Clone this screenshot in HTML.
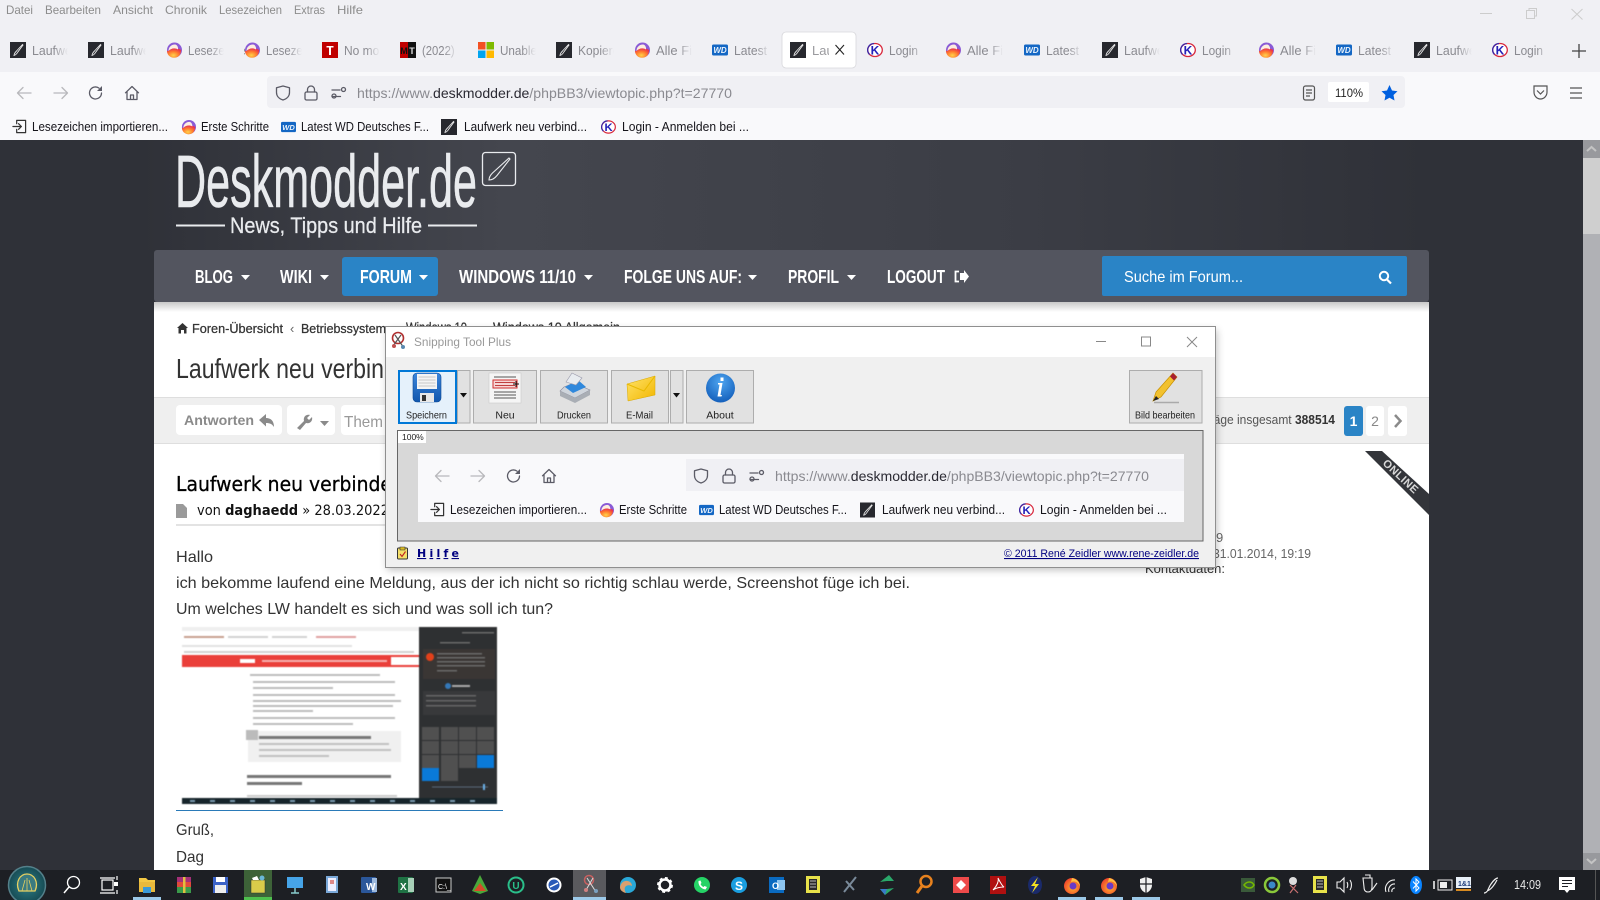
<!DOCTYPE html>
<html lang="de"><head><meta charset="utf-8"><title>Laufwerk neu verbinden</title>
<style>
html,body{margin:0;padding:0;background:#2f3138;overflow:hidden}
svg{display:block}
text{font-family:"Liberation Sans",Arial,sans-serif}
.m{font-size:12px;fill:#8c8c8c}
.t{font-size:13px;fill:#8a8a90}
.b{font-size:12.5px;fill:#15141a}
.n{font-size:18px;font-weight:700;fill:#fff}
.p{font-size:16px;fill:#333}
.dj{font-family:"DejaVu Sans",sans-serif}
.l{font-size:10.5px;fill:#222;text-anchor:middle}
.ic{fill:none;stroke:#5b5b66;stroke-width:1.3;stroke-linecap:round;stroke-linejoin:round}
.bc{font-size:13px;fill:#333;stroke:#333;stroke-width:.25}
</style></head><body>
<svg xmlns="http://www.w3.org/2000/svg" width="1600" height="900" viewBox="0 0 1600 900">
<defs>
<linearGradient id="fade"><stop offset="0" stop-color="#f0f0f4" stop-opacity="0"/><stop offset="1" stop-color="#f0f0f4"/></linearGradient>
<linearGradient id="hd"><stop offset="0" stop-color="#2f3138"/><stop offset=".09" stop-color="#2f3138"/><stop offset=".32" stop-color="#44464e"/><stop offset=".65" stop-color="#3b3d45"/><stop offset=".9" stop-color="#2f3138"/><stop offset="1" stop-color="#2f3138"/></linearGradient>
<linearGradient id="sh" x2="0" y2="1"><stop offset="0" stop-color="#c8c8c8"/><stop offset="1" stop-color="#fff"/></linearGradient>
<radialGradient id="ffg" cx=".45" cy=".75" r=".7"><stop offset="0" stop-color="#ffd24a"/><stop offset=".55" stop-color="#ff7a2e"/><stop offset="1" stop-color="#e8324e"/></radialGradient>
<linearGradient id="flop" x2="0" y2="1"><stop offset="0" stop-color="#3c86dc"/><stop offset="1" stop-color="#1257ad"/></linearGradient>
<radialGradient id="inf" cx=".5" cy=".3" r=".8"><stop offset="0" stop-color="#4ea5f0"/><stop offset="1" stop-color="#0c56b4"/></radialGradient>
<linearGradient id="env" x2="1" y2="1"><stop offset="0" stop-color="#ffe36a"/><stop offset="1" stop-color="#f2b600"/></linearGradient>
<radialGradient id="orb" cx=".5" cy=".5" r=".55"><stop offset="0" stop-color="#2f7f86"/><stop offset="1" stop-color="#14464f"/></radialGradient>
<radialGradient id="fx" cx=".55" cy=".6" r=".6"><stop offset="0" stop-color="#ffb52e"/><stop offset="1" stop-color="#f0442c"/></radialGradient>
<symbol id="dm" viewBox="0 0 16 16"><rect width="16" height="16" fill="#27282e"/><path d="M4 13.500C4.200 11.500 5.500 10 6.500 9L12.500 2.500L13 3L8 9.800C7 11.500 5.800 13 4 13.500Z" fill="none" stroke="#e8e8e8" stroke-width=".9"/></symbol>
<symbol id="ff" viewBox="0 0 16 16"><circle cx="8.500" cy="8" r="7.500" fill="#8a5bd6"/><path d="M8 15.800C3.500 15.800 .8 12 1 8.500C2 10.500 5 6 8 6C11 6 13.500 7 15.200 8C15 12.500 12.500 15.800 8 15.800Z" fill="url(#ffg)"/><path d="M9 2.500C5 2.500 2.500 5.500 2.500 9C4.500 6.500 9 5.500 12 7.500C12.500 5.500 11 2.500 9 2.500Z" fill="#fdeee0"/></symbol>
<symbol id="wd" viewBox="0 0 16 16"><rect y="2.500" width="16" height="11" rx="1.500" fill="#1467c4"/><text x="8" y="11" font-size="8" font-weight="700" font-style="italic" text-anchor="middle" fill="#e9f2fb">WD</text></symbol>
<symbol id="kk" viewBox="0 0 16 16"><ellipse cx="8" cy="8" rx="7.300" ry="6.500" fill="#fff" stroke="#d8283c" stroke-width="1.300"/><path d="M7 1.500A6.500 6.500 0 0 0 2.500 12.500" fill="none" stroke="#3b2aa8" stroke-width="1.300"/><text x="8" y="12.500" font-size="12" font-weight="700" text-anchor="middle" fill="#2420b8">K</text></symbol>
<symbol id="tt" viewBox="0 0 16 16"><rect width="16" height="16" fill="#c00000"/><path d="M4.500 4H11.500V5.500H9V13H7V5.500H4.500Z" fill="#fff"/></symbol>
<symbol id="mt" viewBox="0 0 16 16"><rect width="8" height="16" fill="#c00000"/><rect x="8" width="8" height="16" fill="#111"/><text x="4" y="12" font-size="9" font-weight="700" text-anchor="middle" fill="#111">M</text><text x="12" y="12" font-size="9" font-weight="700" text-anchor="middle" fill="#ddd">T</text></symbol>
<symbol id="ms" viewBox="0 0 16 16"><rect width="7.500" height="7.500" fill="#f25022"/><rect x="8.500" width="7.500" height="7.500" fill="#7fba00"/><rect y="8.500" width="7.500" height="7.500" fill="#00a4ef"/><rect x="8.500" y="8.500" width="7.500" height="7.500" fill="#ffb900"/></symbol>
<symbol id="bk" viewBox="0 0 16 16"><path class="ic" style="stroke:#b8b8bc" d="M15 8H1.500M7 2.500L1.500 8L7 13.500"/></symbol>
<symbol id="fw" viewBox="0 0 16 16"><path class="ic" style="stroke:#b8b8bc" d="M1 8H14.500M9 2.500L14.500 8L9 13.500"/></symbol>
<symbol id="rl" viewBox="0 0 16 16"><path class="ic" d="M13.500 8A6 6 0 1 1 11 3.100"/><path d="M14 1V6H9Z" fill="#5b5b66"/></symbol>
<symbol id="hm" viewBox="0 0 16 16"><path class="ic" d="M1.500 7.800L8 1.500L14.500 7.800M3 6.500V14.500H13V6.500M6.500 14.500V10H9.500V14.500"/></symbol>
<symbol id="sd" viewBox="0 0 16 16"><path class="ic" d="M8 1L14.500 2.800V7.500C14.500 11 12 13.800 8 15C4 13.800 1.500 11 1.500 7.500V2.800Z"/></symbol>
<symbol id="lk" viewBox="0 0 16 16"><rect class="ic" x="2" y="7" width="12" height="8" rx="1.500"/><path class="ic" d="M4.500 7V4.500A3.500 3.500 0 0 1 11.500 4.500V7"/></symbol>
<symbol id="pm" viewBox="0 0 16 16"><path class="ic" d="M1 5H9M1 11.500H9.500"/><circle class="ic" cx="12.500" cy="4.500" r="2"/><circle class="ic" cx="3" cy="11" r="2"/></symbol>
<symbol id="im" viewBox="0 0 16 16"><path class="ic" style="stroke:#333" d="M5 1.500H14.500V14.500H5V11M5 5V1.500M1 8H10M7 5L10 8L7 11"/></symbol>
</defs>

<!-- chrome -->
<rect width="1600" height="72" fill="#f0f0f4"/>
<rect y="72" width="1600" height="68" fill="#f9f9fb"/>
<text class="m" x="6" y="14" textLength="27" lengthAdjust="spacingAndGlyphs">Datei</text>
<text class="m" x="45" y="14" textLength="56" lengthAdjust="spacingAndGlyphs">Bearbeiten</text>
<text class="m" x="113" y="14" textLength="40" lengthAdjust="spacingAndGlyphs">Ansicht</text>
<text class="m" x="165" y="14" textLength="42" lengthAdjust="spacingAndGlyphs">Chronik</text>
<text class="m" x="219" y="14" textLength="63" lengthAdjust="spacingAndGlyphs">Lesezeichen</text>
<text class="m" x="294" y="14" textLength="31" lengthAdjust="spacingAndGlyphs">Extras</text>
<text class="m" x="337" y="14" textLength="26" lengthAdjust="spacingAndGlyphs">Hilfe</text>
<path d="M1480 13.500H1492" stroke="#ccc"/><path d="M1526.500 10.500H1534.500V18.500H1526.500ZM1529 10.500V8.500H1536.500V16H1534.500" fill="none" stroke="#ccc"/><path d="M1571.500 9L1582.500 19.500M1582.500 9L1571.500 19.500" stroke="#ccc"/>

<!-- tabs -->
<text class="t" x="32" y="55" textLength="50" lengthAdjust="spacingAndGlyphs">Laufwerk</text><text class="t" x="110" y="55" textLength="50" lengthAdjust="spacingAndGlyphs">Laufwerk</text><text class="t" x="188" y="55" textLength="64" lengthAdjust="spacingAndGlyphs">Lesezeichen</text><text class="t" x="266" y="55" textLength="64" lengthAdjust="spacingAndGlyphs">Lesezeichen</text><text class="t" x="344" y="55" textLength="46" lengthAdjust="spacingAndGlyphs">No more</text><text class="t" x="422" y="55" textLength="42" lengthAdjust="spacingAndGlyphs">(2022) a</text><text class="t" x="500" y="55" textLength="37" lengthAdjust="spacingAndGlyphs">Unable</text><text class="t" x="578" y="55" textLength="48" lengthAdjust="spacingAndGlyphs">Kopieren</text><text class="t" x="656" y="55" textLength="36" lengthAdjust="spacingAndGlyphs">Alle Fi</text><text class="t" x="734" y="55" textLength="33" lengthAdjust="spacingAndGlyphs">Latest</text><text class="t" x="889" y="55" textLength="29" lengthAdjust="spacingAndGlyphs">Login</text><text class="t" x="967" y="55" textLength="36" lengthAdjust="spacingAndGlyphs">Alle Fi</text><text class="t" x="1046" y="55" textLength="33" lengthAdjust="spacingAndGlyphs">Latest</text><text class="t" x="1124" y="55" textLength="50" lengthAdjust="spacingAndGlyphs">Laufwerk</text><text class="t" x="1202" y="55" textLength="29" lengthAdjust="spacingAndGlyphs">Login</text><text class="t" x="1280" y="55" textLength="36" lengthAdjust="spacingAndGlyphs">Alle Fi</text><text class="t" x="1358" y="55" textLength="33" lengthAdjust="spacingAndGlyphs">Latest</text><text class="t" x="1436" y="55" textLength="50" lengthAdjust="spacingAndGlyphs">Laufwerk</text><text class="t" x="1514" y="55" textLength="29" lengthAdjust="spacingAndGlyphs">Login</text>
<g fill="url(#fade)"><rect x="54" y="40" width="14" height="22"/><rect x="132" y="40" width="14" height="22"/><rect x="210" y="40" width="14" height="22"/><rect x="288" y="40" width="14" height="22"/><rect x="366" y="40" width="14" height="22"/><rect x="444" y="40" width="14" height="22"/><rect x="522" y="40" width="14" height="22"/><rect x="600" y="40" width="14" height="22"/><rect x="678" y="40" width="14" height="22"/><rect x="756" y="40" width="14" height="22"/><rect x="911" y="40" width="14" height="22"/><rect x="989" y="40" width="14" height="22"/><rect x="1068" y="40" width="14" height="22"/><rect x="1146" y="40" width="14" height="22"/><rect x="1224" y="40" width="14" height="22"/><rect x="1302" y="40" width="14" height="22"/><rect x="1380" y="40" width="14" height="22"/><rect x="1458" y="40" width="14" height="22"/><rect x="1536" y="40" width="14" height="22"/></g>
<g fill="#f0f0f4"><rect x="68" y="40" width="20" height="22"/><rect x="146" y="40" width="20" height="22"/><rect x="224" y="40" width="20" height="22"/><rect x="302" y="40" width="20" height="22"/><rect x="380" y="40" width="20" height="22"/><rect x="458" y="40" width="20" height="22"/><rect x="536" y="40" width="20" height="22"/><rect x="614" y="40" width="20" height="22"/><rect x="692" y="40" width="20" height="22"/><rect x="770" y="40" width="12" height="22"/><rect x="925" y="40" width="20" height="22"/><rect x="1003" y="40" width="20" height="22"/><rect x="1082" y="40" width="20" height="22"/><rect x="1160" y="40" width="20" height="22"/><rect x="1238" y="40" width="20" height="22"/><rect x="1316" y="40" width="20" height="22"/><rect x="1394" y="40" width="20" height="22"/><rect x="1472" y="40" width="20" height="22"/><rect x="1550" y="40" width="20" height="22"/></g>
<use href="#dm" x="10" y="42" width="16" height="16"/><use href="#dm" x="88" y="42" width="16" height="16"/><use href="#ff" x="166" y="42" width="16" height="16"/><use href="#ff" x="244" y="42" width="16" height="16"/><use href="#tt" x="322" y="42" width="16" height="16"/><use href="#mt" x="400" y="42" width="16" height="16"/><use href="#ms" x="478" y="42" width="16" height="16"/><use href="#dm" x="556" y="42" width="16" height="16"/><use href="#ff" x="634" y="42" width="16" height="16"/><use href="#wd" x="712" y="42" width="16" height="16"/>
<rect x="782" y="32" width="74" height="36" rx="4" fill="#fff" stroke="#d8d8dc" stroke-width=".8"/>
<use href="#dm" x="790" y="42" width="16" height="16"/>
<text x="812" y="55" font-size="13" fill="#9a9a9e">Lau</text><rect x="829" y="40" width="8" height="20" fill="#fff"/>
<path d="M835.500 45L844 54.500M844 45L835.500 54.500" stroke="#222" stroke-width="1.100"/>
<use href="#kk" x="867" y="42" width="16" height="16"/><use href="#ff" x="945" y="42" width="16" height="16"/><use href="#wd" x="1024" y="42" width="16" height="16"/><use href="#dm" x="1102" y="42" width="16" height="16"/><use href="#kk" x="1180" y="42" width="16" height="16"/><use href="#ff" x="1258" y="42" width="16" height="16"/><use href="#wd" x="1336" y="42" width="16" height="16"/><use href="#dm" x="1414" y="42" width="16" height="16"/><use href="#kk" x="1492" y="42" width="16" height="16"/>
<path d="M1579 44V58M1572 51H1586" stroke="#444" stroke-width="1.300"/>

<!-- toolbar -->
<use href="#bk" x="16" y="85" width="16" height="16"/><use href="#fw" x="53" y="85" width="16" height="16"/><use href="#rl" x="88" y="85" width="16" height="16"/><use href="#hm" x="124" y="85" width="16" height="16"/>
<rect x="267" y="76" width="1138" height="32" rx="4" fill="#f0f0f4"/>
<use href="#sd" x="275" y="85" width="16" height="16"/><use href="#lk" x="303" y="85" width="16" height="16"/><use href="#pm" x="331" y="85" width="16" height="16"/>
<text x="357" y="98" font-size="14" fill="#8a8a90" textLength="375" lengthAdjust="spacingAndGlyphs">https://www.<tspan fill="#2b2a33">deskmodder.de</tspan>/phpBB3/viewtopic.php?t=27770</text>
<g fill="none" stroke="#555" stroke-width="1.200"><rect x="1303.500" y="86" width="11" height="14" rx="2"/><path d="M1306 90H1312M1306 93H1312M1306 96H1310"/></g>
<rect x="1328" y="82" width="41" height="20" rx="2" fill="#fff"/><text x="1335" y="97" font-size="12" fill="#222" textLength="28" lengthAdjust="spacingAndGlyphs">110%</text>
<path d="M1389.500 85L1392 90.500L1397.500 91.200L1393.500 95L1394.500 100.500L1389.500 97.800L1384.500 100.500L1385.500 95L1381.500 91.200L1387 90.500Z" fill="#0060df"/>
<path d="M1534 86H1547V92A6.500 7 0 0 1 1534 92ZM1537 90.500L1540.500 94L1544 90.500" fill="none" stroke="#555" stroke-width="1.200"/>
<path d="M1570 88H1582M1570 93H1582M1570 98H1582" stroke="#555" stroke-width="1.200"/>

<!-- bookmarks -->
<use href="#im" x="12" y="119" width="15" height="15"/><use href="#ff" x="181" y="119" width="15" height="16"/><use href="#wd" x="281" y="119" width="15" height="16"/><use href="#dm" x="441" y="119" width="16" height="16"/><use href="#kk" x="601" y="119" width="15" height="16"/>
<text class="b" x="32" y="131" textLength="136" lengthAdjust="spacingAndGlyphs">Lesezeichen importieren...</text>
<text class="b" x="201" y="131" textLength="68" lengthAdjust="spacingAndGlyphs">Erste Schritte</text>
<text class="b" x="301" y="131" textLength="128" lengthAdjust="spacingAndGlyphs">Latest WD Deutsches F...</text>
<text class="b" x="464" y="131" textLength="123" lengthAdjust="spacingAndGlyphs">Laufwerk neu verbind...</text>
<text class="b" x="622" y="131" textLength="127" lengthAdjust="spacingAndGlyphs">Login - Anmelden bei ...</text>

<!-- page -->
<rect y="140" width="1583" height="730" fill="#2f3138"/>
<rect y="140" width="1583" height="110" fill="url(#hd)"/>
<text x="175" y="207" font-size="74" fill="#e9ebee" stroke="#e9ebee" stroke-width=".6" textLength="302" lengthAdjust="spacingAndGlyphs">Deskmodder.de</text>
<rect x="482.500" y="152.500" width="33" height="33" rx="3" fill="none" stroke="#e9ebee" stroke-width="1.300"/>
<path d="M489 180C489 177 490.500 175 492.500 173L509 158L510 159L497 175.500C495 178 492 180 489 180Z" fill="none" stroke="#e9ebee" stroke-width="1.100"/>
<path d="M176 225.500H225M428 225.500H477" stroke="#e9ebee" stroke-width="2"/>
<text x="230" y="233" font-size="22" fill="#e9ebee" stroke="#e9ebee" stroke-width=".25" textLength="192" lengthAdjust="spacingAndGlyphs">News, Tipps und Hilfe</text>

<rect x="154" y="250" width="1275" height="52" rx="3" fill="#53555f"/>
<rect x="342" y="257" width="96" height="39" rx="3" fill="#2a84c6"/>
<text class="n" x="195" y="283" textLength="38" lengthAdjust="spacingAndGlyphs">BLOG</text>
<text class="n" x="280" y="283" textLength="32" lengthAdjust="spacingAndGlyphs">WIKI</text>
<text class="n" x="360" y="283" textLength="52" lengthAdjust="spacingAndGlyphs">FORUM</text>
<text class="n" x="459" y="283" textLength="117" lengthAdjust="spacingAndGlyphs">WINDOWS 11/10</text>
<text class="n" x="624" y="283" textLength="118" lengthAdjust="spacingAndGlyphs">FOLGE UNS AUF:</text>
<text class="n" x="788" y="283" textLength="51" lengthAdjust="spacingAndGlyphs">PROFIL</text>
<text class="n" x="887" y="283" textLength="58" lengthAdjust="spacingAndGlyphs">LOGOUT</text>
<g fill="#fff"><path d="M241 275H250L245.500 280Z"/><path d="M320 275H329L324.500 280Z"/><path d="M419 275H428L423.500 280Z"/><path d="M584 275H593L588.500 280Z"/><path d="M748 275H757L752.500 280Z"/><path d="M847 275H856L851.500 280Z"/></g>
<path d="M960 273H964V270L969 276.500L964 283V280H960Z" fill="#fff"/><path d="M959 271.500H955.500V281.500H959" fill="none" stroke="#fff" stroke-width="1.800"/>
<rect x="1102" y="256" width="305" height="40" rx="2" fill="#2a84c6"/>
<text x="1124" y="282" font-size="16" fill="#fff" textLength="119" lengthAdjust="spacingAndGlyphs">Suche im Forum...</text>
<circle cx="1384" cy="276" r="4.200" fill="none" stroke="#fff" stroke-width="2"/><path d="M1387 279.500L1391 283.500" stroke="#fff" stroke-width="2.200"/>

<rect x="154" y="302" width="1275" height="568" fill="#fff"/>
<rect x="154" y="302" width="1275" height="10" fill="url(#sh)"/>
<path d="M177 328L182.500 323L188 328H186.500V333.500H184V330H181V333.500H178.500V328Z" fill="#333"/>
<text class="bc" x="192" y="333" textLength="91" lengthAdjust="spacingAndGlyphs">Foren-Übersicht</text>
<text x="290" y="333" font-size="13" fill="#666">‹</text>
<text class="bc" x="301" y="333" textLength="85" lengthAdjust="spacingAndGlyphs">Betriebssystem</text>
<text class="bc" style="font-size:14px" x="406" y="332" textLength="61" lengthAdjust="spacingAndGlyphs">Windows 10</text>
<text class="bc" style="font-size:14px" x="493" y="332" textLength="127" lengthAdjust="spacingAndGlyphs">Windows 10 Allgemein</text>
<text x="176" y="378" font-size="28" fill="#333" textLength="208" lengthAdjust="spacingAndGlyphs">Laufwerk neu verbin</text>

<rect x="154" y="397" width="1275" height="46" fill="#efefef"/>
<path d="M154 397.500H1429M154 443.500H1429" stroke="#dedede"/>
<rect x="176" y="405" width="106" height="30" rx="4" fill="#fff"/>
<text x="184" y="425" font-size="14" font-weight="700" fill="#8a8a8a" textLength="70" lengthAdjust="spacingAndGlyphs">Antworten</text>
<path d="M259 420L266 414V418C271 418 274 421 274 427C272 424 270 423 266 423V426.500Z" fill="#8a8a8a"/>
<rect x="287" y="405" width="48" height="30" rx="4" fill="#fff"/>
<path d="M297 428L304 421C303 417 306 414 310 415L307 418L309 420L312 417C313 421 310 424 306 423L300 430Z" fill="#8a8a8a"/>
<path d="M320 421H329L324.500 426Z" fill="#8a8a8a"/>
<rect x="341" y="405" width="60" height="30" rx="4" fill="#fff"/>
<text x="344" y="427" font-size="16" fill="#999" textLength="39" lengthAdjust="spacingAndGlyphs">Them</text>
<text x="1189" y="424" font-size="13" fill="#555" textLength="146" lengthAdjust="spacingAndGlyphs">Beiträge insgesamt <tspan font-weight="700" fill="#333">388514</tspan></text>
<rect x="1344" y="406" width="19" height="30" rx="3" fill="#2a84c6"/><text x="1353.500" y="426" font-size="14" fill="#fff" font-weight="700" text-anchor="middle">1</text>
<rect x="1366" y="406" width="18" height="30" rx="3" fill="#fff"/><text x="1375" y="426" font-size="14" fill="#888" text-anchor="middle">2</text>
<rect x="1388" y="406" width="19" height="30" rx="3" fill="#fff"/><path d="M1395 415L1400.500 421L1395 427" fill="none" stroke="#8a8a8a" stroke-width="2.500"/>

<path d="M1365 451H1382L1429 494V515Z" fill="#33353a"/>
<text transform="translate(1382,464) rotate(43)" font-size="11" font-weight="700" fill="#d8d8d8" textLength="44" lengthAdjust="spacing">ONLINE</text>

<text class="dj" x="176" y="491" font-size="20" fill="#000" stroke="#000" stroke-width=".3" textLength="216" lengthAdjust="spacingAndGlyphs">Laufwerk neu verbinde</text>
<path d="M176 504H183L187 508V518H176Z" fill="#9a9a9a"/>
<text class="dj" x="197" y="515" font-size="14" fill="#111" textLength="192" lengthAdjust="spacingAndGlyphs">von <tspan font-weight="700">daghaedd</tspan> » 28.03.2022</text>
<path d="M176 525H390" stroke="#e3e3e3" stroke-width="2"/>

<text class="p" x="176" y="562" textLength="37" lengthAdjust="spacingAndGlyphs">Hallo</text>
<text class="p" x="176" y="588" textLength="734" lengthAdjust="spacingAndGlyphs">ich bekomme laufend eine Meldung, aus der ich nicht so richtig schlau werde, Screenshot füge ich bei.</text>
<text class="p" x="176" y="614" textLength="377" lengthAdjust="spacingAndGlyphs">Um welches LW handelt es sich und was soll ich tun?</text>

<text x="1216" y="542" font-size="13" fill="#666">9</text>
<text x="1213" y="558" font-size="13" fill="#666" textLength="98" lengthAdjust="spacingAndGlyphs">31.01.2014, 19:19</text>
<text x="1145" y="573" font-size="13" fill="#333" textLength="80" lengthAdjust="spacingAndGlyphs">Kontaktdaten:</text>

<!-- embedded image -->
<rect x="182" y="627" width="238" height="177" fill="#fff"/>
<g style="filter:blur(.5px)">
<g fill="#d2d2d2"><rect x="182" y="627" width="238" height="4" fill="#efefef"/><rect x="184" y="636" width="40" height="2" fill="#c8a090"/><rect x="228" y="636" width="40" height="2"/><rect x="272" y="636" width="35" height="2"/><rect x="316" y="636" width="40" height="2" fill="#e0a0a0"/><rect x="182" y="645" width="170" height="2" fill="#e2e2e2"/><rect x="184" y="651" width="230" height="2"/></g>
<rect x="182" y="655" width="238" height="12" fill="#ea3f3a"/><rect x="240" y="659" width="15" height="4" fill="#fff"/><rect x="262" y="660" width="125" height="2" fill="#f7b3b0"/><rect x="391" y="657" width="28" height="8" fill="#fff"/>
<g fill="#bdbdbd"><rect x="250" y="674" width="130" height="2"/><rect x="253" y="681" width="142" height="2"/><rect x="253" y="687" width="80" height="2"/><rect x="253" y="694" width="142" height="2"/><rect x="253" y="700" width="148" height="2"/><rect x="253" y="705" width="140" height="2"/><rect x="253" y="710" width="60" height="2"/><rect x="253" y="717" width="142" height="2"/><rect x="253" y="723" width="100" height="2"/></g>
<rect x="248" y="731" width="153" height="31" fill="#f0f0f0"/><rect x="246" y="730" width="12" height="10" fill="#bbb"/>
<rect x="259" y="736" width="112" height="3" fill="#777"/>
<g fill="#c0c0c0"><rect x="259" y="743" width="130" height="2"/><rect x="259" y="749" width="132" height="2"/><rect x="259" y="755" width="70" height="2"/></g>
<rect x="247" y="775" width="144" height="3" fill="#777"/><rect x="247" y="782" width="55" height="3" fill="#777"/><rect x="247" y="795" width="150" height="2" fill="#ccc"/>
<rect x="419" y="627" width="78" height="177" fill="#2e3032"/>
<rect x="423" y="649" width="72" height="30" fill="#3a3634"/><circle cx="430" cy="657" r="4" fill="#e2401a"/>
<g fill="#6a6a6a"><rect x="437" y="653" width="45" height="1.500"/><rect x="437" y="657" width="48" height="1.500"/><rect x="437" y="661" width="48" height="1.500"/><rect x="437" y="665" width="48" height="1.500"/><rect x="437" y="670" width="20" height="1.500"/><rect x="440" y="642" width="30" height="1.500"/><rect x="462" y="632" width="32" height="1.500"/></g>
<circle cx="448" cy="686" r="3" fill="#3478b8"/><rect x="452" y="685" width="18" height="2" fill="#aaa"/><rect x="423" y="691" width="72" height="24" fill="#38393b"/>
<g fill="#666"><rect x="426" y="695" width="50" height="1.500"/><rect x="426" y="700" width="50" height="1.500"/><rect x="426" y="705" width="50" height="1.500"/></g>
<g fill="#505050"><rect x="422" y="727" width="17" height="13"/><rect x="441" y="727" width="17" height="13"/><rect x="459" y="727" width="17" height="13"/><rect x="477" y="727" width="17" height="13"/><rect x="422" y="741" width="17" height="13"/><rect x="441" y="741" width="17" height="13"/><rect x="459" y="741" width="17" height="13"/><rect x="477" y="741" width="17" height="13"/><rect x="422" y="755" width="17" height="13"/><rect x="441" y="755" width="17" height="13"/><rect x="459" y="755" width="17" height="13"/><rect x="441" y="768" width="17" height="13"/></g>
<rect x="477" y="755" width="17" height="13" fill="#0a7ad8"/><rect x="422" y="768" width="17" height="13" fill="#0a7ad8"/>
<path d="M432 787H488" stroke="#5a6a7a"/><rect x="483" y="784" width="2" height="6" fill="#6ab0e8"/>
<rect x="182" y="798" width="315" height="6" fill="#17252b"/>
<g fill="#7a9ab0"><rect x="190" y="800" width="5" height="2"/><rect x="210" y="800" width="5" height="2"/><rect x="230" y="800" width="5" height="2"/><rect x="250" y="800" width="5" height="2"/><rect x="270" y="800" width="5" height="2"/><rect x="290" y="800" width="5" height="2"/><rect x="310" y="800" width="5" height="2"/><rect x="330" y="800" width="5" height="2"/><rect x="350" y="800" width="5" height="2"/><rect x="370" y="800" width="5" height="2"/><rect x="390" y="800" width="5" height="2"/><rect x="410" y="800" width="5" height="2"/><rect x="430" y="800" width="5" height="2"/><rect x="450" y="800" width="5" height="2"/><rect x="470" y="800" width="5" height="2"/></g>
</g>
<path d="M176 810.500H503" stroke="#2a7ab8"/>
<text class="p" x="176" y="835" textLength="38" lengthAdjust="spacingAndGlyphs">Gruß,</text>
<text class="p" x="176" y="862" textLength="28" lengthAdjust="spacingAndGlyphs">Dag</text>

<!-- scrollbar -->
<rect x="1583" y="140" width="17" height="730" fill="#b0b1b5"/>
<rect x="1583" y="140" width="17" height="18" fill="#98999d"/>
<rect x="1583" y="158" width="17" height="76" fill="#cfcfcf"/>
<rect x="1583" y="853" width="17" height="17" fill="#98999d"/>
<path d="M1587 151L1591.500 147L1596 151M1587 859L1591.500 863L1596 859" fill="none" stroke="#c4c4c4" stroke-width="2"/>

<!-- dialog -->
<rect x="385" y="327" width="830" height="240" fill="#000" opacity=".25" transform="translate(2,3)" style="filter:blur(4px)"/>
<rect x="385.500" y="326.500" width="830" height="241" fill="#f0f0f0" stroke="#8f8f8f"/>
<rect x="386" y="327" width="829" height="30" fill="#fff"/>
<g><circle cx="398" cy="338" r="5.500" fill="none" stroke="#b03030" stroke-width="1.600"/><path d="M395 335L404 348M401 335L393 346" stroke="#555" stroke-width="1.200"/><circle cx="394" cy="346" r="2" fill="#c05050"/><circle cx="403" cy="347" r="2" fill="#5a8ab0"/></g>
<text x="414" y="346" font-size="12" fill="#999" textLength="97" lengthAdjust="spacingAndGlyphs">Snipping Tool Plus</text>
<path d="M1096 341.500H1106" stroke="#888"/><rect x="1141.500" y="337" width="9" height="9" fill="none" stroke="#888"/><path d="M1187 337L1197 347M1197 337L1187 347" stroke="#888"/>

<g transform="translate(0,-1)">
<g fill="#e1e1e1" stroke="#adadad"><rect x="457.500" y="371.500" width="12.500" height="52.500"/><rect x="473.500" y="371.500" width="63" height="52.500"/><rect x="540.500" y="371.500" width="67" height="52.500"/><rect x="611.500" y="371.500" width="57" height="52.500"/><rect x="670.500" y="371.500" width="12.500" height="52.500"/><rect x="686.500" y="371.500" width="67" height="52.500"/><rect x="1129.500" y="371.500" width="72.500" height="52.500"/></g>
<rect x="399" y="372" width="57" height="52" fill="#e5f1fb" stroke="#0078d7" stroke-width="2"/>
<path d="M460 394H467L463.500 398.500Z" fill="#111"/><path d="M673 394H680L676.500 398.500Z" fill="#111"/>
<rect x="413" y="374" width="28" height="29" rx="4" fill="url(#flop)" stroke="#0d4a94" stroke-width=".6"/><rect x="417" y="375" width="20" height="15" fill="#f4f4f4"/><path d="M418.500 378H435.500M418.500 381H435.500M418.500 384H435.500M418.500 387H435.500" stroke="#c8c8c8"/><rect x="420" y="394" width="14" height="9" fill="#e8e8e8"/><rect x="422" y="396" width="4" height="6" fill="#333"/>
<rect x="489" y="374" width="32" height="30" fill="#f5f5f5" stroke="#ccc" stroke-width=".6"/><g stroke="#555"><path d="M494 378H516M494 393H516M494 396H516M494 399H516"/></g><rect x="493" y="381" width="24" height="8" fill="#f6d6d6" stroke="#d03030"/><path d="M495 383.500H515M495 386.500H515" stroke="#c04040"/><path d="M513 385H519M516 382V388" stroke="#111"/>
<path d="M564 388L574 384L590 391L575 399L560 392Z" fill="#cfd5dc" stroke="#889" stroke-width=".6"/><path d="M565 388L578 381L586 388L573 394Z" fill="#2f88dc"/><path d="M566 383L572 374L582 379L576 386Z" fill="#e8ecf0" stroke="#99a" stroke-width=".6"/><path d="M560 392L575 399V404L560 397ZM575 399L590 391V396L575 404Z" fill="#a9aeb5"/>
<path d="M627 385L655 377L655 396L628 402Z" fill="url(#env)" stroke="#d8a800" stroke-width=".5"/><path d="M627 385L644 392L655 377" fill="none" stroke="#e8b800"/>
<circle cx="720.500" cy="389" r="14.500" fill="url(#inf)"/><path d="M718 384H722.500L720.500 396H722L721.500 397.500H717.500L719.500 385.500H718ZM720.500 378.500H723.500V382H720.500Z" fill="#fff"/>
<path d="M1156 393L1173 374L1177 378L1161 398L1153 402Z" fill="#f2c12e" stroke="#c89000" stroke-width=".7"/><path d="M1170 377.500L1173 374L1177 378L1174 381.500Z" fill="#a82030"/><path d="M1153 402L1156 397L1159 400Z" fill="#222"/><path d="M1154 403.500H1179" stroke="#aaa" stroke-width="1.500"/>
<text class="l" x="426.500" y="419.500" textLength="41" lengthAdjust="spacingAndGlyphs">Speichern</text>
<text class="l" x="505" y="419.500">Neu</text>
<text class="l" x="574" y="419.500" textLength="34" lengthAdjust="spacingAndGlyphs">Drucken</text>
<text class="l" x="639.500" y="419.500" textLength="27" lengthAdjust="spacingAndGlyphs">E-Mail</text>
<text class="l" x="720" y="419.500">About</text>
<text class="l" x="1165" y="419.500" textLength="60" lengthAdjust="spacingAndGlyphs">Bild bearbeiten</text>
</g>

<rect x="397.500" y="430.500" width="805.500" height="110.500" fill="#d8d8d8" stroke="#666"/>
<rect x="398" y="431" width="28" height="12" fill="#fff"/><text x="402" y="440" font-size="8.500" fill="#222">100%</text>
<rect x="418" y="454" width="766" height="68" fill="#f9f9fb"/><rect x="686" y="459" width="498" height="32" fill="#f0f0f4"/>
<use href="#bk" x="434" y="468" width="16" height="16"/><use href="#fw" x="470" y="468" width="16" height="16"/><use href="#rl" x="506" y="468" width="16" height="16"/><use href="#hm" x="541" y="468" width="16" height="16"/><use href="#sd" x="693" y="468" width="16" height="16"/><use href="#lk" x="721" y="468" width="16" height="16"/><use href="#pm" x="749" y="468" width="16" height="16"/>
<text x="775" y="481" font-size="14" fill="#8a8a90" textLength="374" lengthAdjust="spacingAndGlyphs">https://www.<tspan fill="#2b2a33">deskmodder.de</tspan>/phpBB3/viewtopic.php?t=27770</text>
<use href="#im" x="430" y="502" width="15" height="15"/><use href="#ff" x="599" y="502" width="15" height="16"/><use href="#wd" x="699" y="502" width="15" height="16"/><use href="#dm" x="860" y="502" width="15" height="16"/><use href="#kk" x="1019" y="502" width="15" height="16"/>
<text class="b" x="450" y="514" textLength="137" lengthAdjust="spacingAndGlyphs">Lesezeichen importieren...</text>
<text class="b" x="619" y="514" textLength="68" lengthAdjust="spacingAndGlyphs">Erste Schritte</text>
<text class="b" x="719" y="514" textLength="128" lengthAdjust="spacingAndGlyphs">Latest WD Deutsches F...</text>
<text class="b" x="882" y="514" textLength="123" lengthAdjust="spacingAndGlyphs">Laufwerk neu verbind...</text>
<text class="b" x="1040" y="514" textLength="127" lengthAdjust="spacingAndGlyphs">Login - Anmelden bei ...</text>

<rect x="397.500" y="548" width="10" height="11" rx="1" fill="#f4e06a" stroke="#333"/><path d="M400 547H405V550H400Z" fill="#d8b820" stroke="#333" stroke-width=".6"/><path d="M400 554L402 556.500L405.500 551.500" fill="none" stroke="#c02020" stroke-width="1.100"/>
<text class="dj" x="417" y="557" font-size="11" font-weight="700" fill="#000080" text-decoration="underline" textLength="42" lengthAdjust="spacing">Hilfe</text>
<text x="1004" y="557" font-size="11" fill="#000080" text-decoration="underline" textLength="195" lengthAdjust="spacingAndGlyphs">© 2011 René Zeidler www.rene-zeidler.de</text>

<!-- taskbar -->
<rect y="870" width="1600" height="30" fill="#1d1f24"/>
<rect x="244" y="870" width="28" height="30" fill="#3d6238"/><rect x="573" y="870" width="33" height="30" fill="#5a5a5e"/>
<rect x="133" y="897" width="28" height="3" fill="#9cc9e8"/><rect x="244" y="897" width="28" height="3" fill="#4ec04e"/><rect x="573" y="897" width="33" height="3" fill="#9cc9e8"/><rect x="1058" y="897" width="28" height="3" fill="#9cc9e8"/><rect x="1095" y="897" width="28" height="3" fill="#9cc9e8"/><rect x="1132" y="897" width="28" height="3" fill="#9cc9e8"/>
<circle cx="27" cy="885" r="18.500" fill="url(#orb)" stroke="#54808a" stroke-width="1.500"/><path d="M19 891C15 882 20 874 27 874C34 874 39 882 35 891Z" fill="#3a7a80" stroke="#e8d060" stroke-width="1.300"/><path d="M22 891L25 880M32 891L29 880M27 891V878" stroke="#e8d060" stroke-width=".8"/>
<circle cx="73.500" cy="882.500" r="6" fill="none" stroke="#fff" stroke-width="1.300"/><path d="M69 887L64 893" stroke="#fff" stroke-width="1.500"/>
<g fill="none" stroke="#fff" stroke-width="1.200"><rect x="102" y="880" width="11" height="10"/><path d="M100 878H115M100 893H115M117 876V880M117 890V894"/></g><rect x="114" y="882" width="4" height="4" fill="#fff"/>
<path d="M139 878H146L148 880H155V892H139Z" fill="#f2c744"/><rect x="139" y="882" width="16" height="10" fill="#e8b93c"/><rect x="143" y="887" width="8" height="6" fill="#3a9ad8"/>
<rect x="177" y="877" width="14" height="16" fill="#a43078"/><rect x="177" y="882" width="14" height="5" fill="#e04a3a"/><rect x="177" y="887" width="14" height="6" fill="#3a9a4a"/><rect x="183" y="877" width="2.500" height="16" fill="#e0c040"/>
<rect x="213" y="877" width="15" height="16" fill="#3c63c8"/><rect x="216" y="877" width="9" height="5" fill="#fff"/><rect x="215" y="885" width="11" height="8" fill="#eee"/>
<rect x="251" y="880" width="14" height="13" fill="#d9cc4a" stroke="#333" stroke-width=".5"/><path d="M252 878L257 876L259 880H253Z" fill="#fff"/><circle cx="262" cy="878" r="2.500" fill="#6ab8d8"/>
<rect x="287" y="877" width="16" height="11" fill="#46a4e8"/><path d="M291 893H299M295 888V893" stroke="#8cc" stroke-width="1.500"/>
<rect x="326" y="876" width="12" height="17" fill="#7aa8d8"/><rect x="328" y="878" width="8" height="13" fill="#eef"/><rect x="330" y="880" width="4" height="4" fill="#d88"/>
<rect x="361" y="877" width="15" height="16" rx="1" fill="#2b579a"/><rect x="372" y="878" width="5" height="14" fill="#9cb8dc"/><text x="366" y="890" font-size="10" font-weight="700" fill="#fff">W</text>
<rect x="398" y="877" width="15" height="16" rx="1" fill="#1f7244"/><rect x="408" y="878" width="6" height="14" fill="#a8d0b8"/><text x="400" y="890" font-size="10" font-weight="700" fill="#fff">X</text>
<rect x="436" y="878" width="15" height="14" fill="#111" stroke="#ccc"/><text x="438" y="889" font-size="7" fill="#fff">C:\_</text>
<path d="M480 875L488 891L480 894L472 891Z" fill="#4aa83a"/><path d="M480 883L486 891H474Z" fill="#d84a2a"/>
<circle cx="516" cy="885" r="7.500" fill="none" stroke="#2abf8a" stroke-width="2"/><text x="516" y="889" font-size="10" font-weight="700" fill="#2abf8a" text-anchor="middle">U</text>
<circle cx="554" cy="885" r="7.500" fill="#fff"/><circle cx="554" cy="885" r="5.500" fill="#2a5ab8"/><path d="M550 887L558 883" stroke="#fff" stroke-width="1.500"/>
<circle cx="589" cy="880" r="4.500" fill="none" stroke="#c86060" stroke-width="1.500"/><path d="M587 878L596 892M593 878L586 890" stroke="#ddd"/><circle cx="586" cy="890" r="2" fill="#d08080"/><circle cx="596" cy="891" r="2" fill="#7aa0c0"/>
<circle cx="628" cy="885" r="8" fill="#2aa8d8"/><path d="M620 887C622 878 632 880 632 886C628 884 622 886 626 893C622 892 620 890 620 887Z" fill="#d8a070"/>
<circle cx="665" cy="885" r="5.500" fill="none" stroke="#fff" stroke-width="2.500"/><circle cx="665" cy="885" r="7.200" fill="none" stroke="#fff" stroke-width="1.500" stroke-dasharray="3 2.600"/>
<circle cx="702" cy="885" r="8" fill="#25d366"/><path d="M698.500 881C698 885 701 889 705.500 889.500L707 887L704.500 886L703.500 887C702 886.500 701 885 700.500 884L701.500 883L700.500 880.500Z" fill="#fff"/>
<circle cx="739" cy="885" r="8" fill="#1a9ee0"/><text x="739" y="890" font-size="12" font-weight="700" fill="#fff" text-anchor="middle">S</text>
<rect x="769" y="877" width="15" height="16" fill="#0a6ac0"/><rect x="777" y="880" width="8" height="10" fill="#8cc4f0"/><text x="772" y="889" font-size="9" font-weight="700" fill="#fff">O</text>
<rect x="806" y="876" width="14" height="17" fill="#e8e24a"/><rect x="809" y="879" width="8" height="11" fill="#2a2a2a"/><path d="M810 881H816M810 884H816M810 887H816" stroke="#bbb"/>
<path d="M844 892L856 877M846 881L854 890" stroke="#7a8a9a" stroke-width="2"/>
<path d="M880 882L889 875L894 881H887ZM894 888L885 895L880 889H887Z" fill="#2aa86a"/><path d="M880 889L887 889L885 895Z" fill="#3a7ac8"/>
<circle cx="926" cy="881.500" r="5.500" fill="none" stroke="#e8821e" stroke-width="2.500"/><path d="M922 886L917 893" stroke="#e8821e" stroke-width="3"/>
<rect x="953" y="877" width="16" height="16" fill="#ee4a4a"/><path d="M961 880L966 885L961 890L956 885Z" fill="#fff"/>
<rect x="990" y="876" width="16" height="18" fill="#b01010"/><path d="M993 890C997 886 999 881 998 878C1000 882 1002 886 1004 887C1000 887 996 888 993 890Z" fill="none" stroke="#fff"/>
<ellipse cx="1035" cy="885" rx="7" ry="9" fill="#1a2a6a"/><path d="M1038 877L1031 886H1035L1032 893L1039 884H1035Z" fill="#f4e020"/>
<circle cx="1072" cy="886" r="8" fill="url(#fx)"/><circle cx="1073" cy="886" r="3.500" fill="#6a3ac8"/><path d="M1072 878C1078 879 1080 884 1080 886C1077 881 1074 881 1071 882Z" fill="#ffc040"/>
<circle cx="1109" cy="886" r="8" fill="url(#fx)"/><circle cx="1110" cy="886" r="3.500" fill="#6a3ac8"/><path d="M1109 878C1115 879 1117 884 1117 886C1114 881 1111 881 1108 882Z" fill="#ffc040"/>
<path d="M1146 877L1152 879V885C1152 889 1149 892 1146 893C1143 892 1140 889 1140 885V879Z" fill="#f0f0f0"/><path d="M1146 877V893M1140 884H1152" stroke="#1d1f24" stroke-width="1.200"/>
<rect x="1241" y="878" width="14" height="14" fill="#3a5a3a"/><path d="M1244 885C1247 881 1252 881 1254 885C1252 889 1247 889 1244 885Z" fill="none" stroke="#76b900" stroke-width="1.500"/>
<circle cx="1272" cy="885" r="7" fill="none" stroke="#8ac83a" stroke-width="2.500"/><circle cx="1272" cy="885" r="3.500" fill="#3a88c8"/>
<circle cx="1293" cy="881" r="4" fill="#ddd"/><path d="M1290 885L1298 893M1296 885L1290 893" stroke="#c87070" stroke-width="1.200"/>
<rect x="1313" y="876" width="14" height="17" fill="#e8e24a"/><rect x="1316" y="879" width="8" height="11" fill="#2a2a2a"/><path d="M1317 881H1323M1317 884H1323M1317 887H1323" stroke="#bbb"/>
<g fill="none" stroke="#eee" stroke-width="1.100"><path d="M1337 882H1340L1344 878V892L1340 888H1337ZM1347 882C1348 884 1348 886 1347 888M1350 880C1352 883 1352 887 1350 890"/><path d="M1363 878H1372V887C1372 891 1370 892 1368 892C1366 892 1364 891 1364 887Z"/><path d="M1365 875H1370V878"/><path d="M1372 890L1377 883"/><path d="M1386 892A9 9 0 0 1 1395 880M1389 892A6 6 0 0 1 1395 884M1392 892A3 3 0 0 1 1395 888"/></g>
<ellipse cx="1416" cy="885" rx="6" ry="9" fill="#0a84ff"/><path d="M1413 881.500L1419 888L1416 891V879L1419 882L1413 888.500" fill="none" stroke="#fff"/>
<rect x="1438" y="880" width="14" height="10" fill="none" stroke="#eee"/><rect x="1440" y="882" width="7" height="6" fill="#eee"/><path d="M1434 881V889" stroke="#eee" stroke-width="1.600"/>
<rect x="1456" y="877" width="15" height="11" fill="#e8f0f8"/><text x="1458" y="886" font-size="7" font-weight="700" fill="#1a3a7a">1&amp;1</text><rect x="1456" y="889" width="15" height="2" fill="#d88a20"/>
<path d="M1484 893C1488 893 1488 888 1491 884C1493 881 1496 878 1498 878M1487 891C1491 890 1495 884 1497 880" fill="none" stroke="#eee" stroke-width="1.200"/>
<text x="1514" y="889" font-size="12.500" fill="#e8e8e8" textLength="27" lengthAdjust="spacingAndGlyphs">14:09</text>
<path d="M1559 877H1575V890H1569.500L1567 893L1564.500 890H1559Z" fill="#fff"/><path d="M1562 880.500H1572M1562 883.500H1572M1562 886.500H1568" stroke="#1d1f24"/>
<path d="M1595.500 870V900" stroke="#555"/>
</svg>
</body></html>
